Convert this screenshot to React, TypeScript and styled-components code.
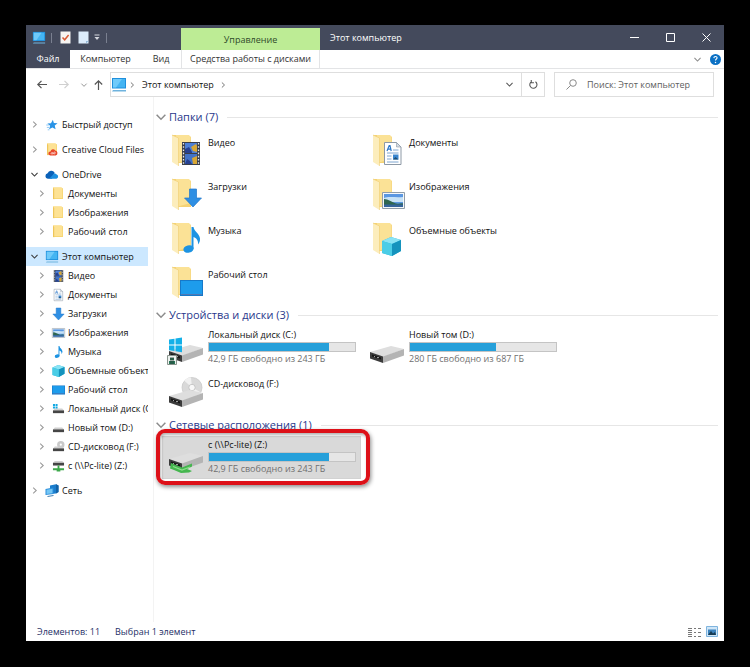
import React from "react";
import styled, { createGlobalStyle, css } from "styled-components";

const GlobalStyle = createGlobalStyle`
  * { box-sizing: border-box; }
  body {
    margin: 0;
    background: #000;
    font-family: "Open Sans", "Noto Sans", sans-serif;
    font-size: 9px;
    line-height: 14px;
    color: #111;
  }
  button, input {
    font: inherit;
    color: inherit;
    border: 0;
    padding: 0;
    margin: 0;
    background: none;
  }
  h2 { margin: 0; font-weight: 400; }
  ul { margin: 0; padding: 0; list-style: none; }
  svg { display: block; flex: none; overflow: visible; }
`;

const Window = styled.div`
  display: flex;
  flex-direction: column;
  min-height: calc(100vh - 51px);
  margin: 25px 26px 26px;
  background: #fff;
`;

/* ---------- title bar ---------- */

const TitleBar = styled.header`
  display: flex;
  height: 25px;
  background: #444a5c;
  color: #fff;
`;

const QuickAccess = styled.div`
  display: flex;
  align-items: center;
  width: 155px;
  padding-left: 6px;
`;

const QuickButton = styled.button<{ $w?: number }>`
  display: flex;
  justify-content: center;
  width: ${(p) => p.$w ?? 18}px;
`;

const Tick = styled.span`
  width: 1px;
  height: 10px;
  margin: 0 4px 0 5px;
  background: #7a8090;
`;

const ContextTab = styled.div`
  align-self: flex-end;
  width: 139px;
  height: 22px;
  line-height: 24px;
  text-align: center;
  color: #2f4a2a;
  background: #bdec95;
`;

const Caption = styled.h1`
  flex: 1;
  margin: 0;
  padding-left: 10px;
  font-size: 9px;
  font-weight: 400;
  line-height: 25px;
`;

const WindowButton = styled.button`
  display: flex;
  align-items: center;
  justify-content: center;
  width: 36px;
`;

/* ---------- ribbon ---------- */

const Ribbon = styled.nav`
  display: flex;
  align-items: center;
  height: 19px;
  border-bottom: 1px solid #e3e4e6;
`;

const RibbonTab = styled.button<{ $w: number; $file?: boolean; $context?: boolean }>`
  width: ${(p) => p.$w}px;
  height: 18px;
  line-height: 18px;
  text-align: center;
  white-space: nowrap;
  color: #333;
  ${(p) =>
    p.$file &&
    css`
      color: #fff;
      background: #444a5c;
    `}
  ${(p) =>
    p.$context &&
    css`
      border: solid #e3e4e6;
      border-width: 0 1px;
    `}
`;

const RibbonTools = styled.div`
  display: flex;
  align-items: center;
  gap: 9px;
  margin-left: auto;
  padding-right: 3px;
`;

const PlainButton = styled.button`
  display: flex;
  align-items: center;
  justify-content: center;
`;

/* ---------- address row ---------- */

const AddressRow = styled.div`
  display: flex;
  align-items: center;
  padding: 3px 10px 0 9px;
`;

const NavButton = styled.button<{ $w: number }>`
  display: flex;
  justify-content: center;
  width: ${(p) => p.$w}px;
`;

const AddressBox = styled.div`
  display: flex;
  flex: 1;
  align-items: center;
  height: 25px;
  margin-left: 1px;
  border: 1px solid #dedede;
`;

const Crumb = styled.button`
  margin: 0 6px;
`;

const AddressEnd = styled.div`
  display: flex;
  align-self: stretch;
  margin-left: auto;
`;

const AddressButton = styled.button<{ $divided?: boolean }>`
  display: flex;
  align-items: center;
  justify-content: center;
  width: 23px;
  border-left: ${(p) => (p.$divided ? "1px solid #dedede" : "0")};
`;

const SearchBox = styled.label`
  display: flex;
  align-items: center;
  gap: 10px;
  width: 160px;
  height: 25px;
  margin-left: 9px;
  padding-left: 11px;
  border: 1px solid #dedede;
`;

const SearchInput = styled.input`
  flex: 1;
  min-width: 0;
  outline: 0;
  &::placeholder {
    color: #606060;
    opacity: 1;
  }
`;

/* ---------- body ---------- */

const Body = styled.div`
  display: flex;
  flex: 1;
`;

const Sidebar = styled.nav`
  width: 128px;
  padding: 18px 5px 0 0;
  border-right: 1px solid #f3f3f3;
`;

const TreeGroup = styled.ul`
  margin-bottom: 6px;
`;

const TreeRow = styled.button<{ $child: boolean; $active: boolean }>`
  display: flex;
  align-items: center;
  width: 100%;
  height: 19px;
  padding-left: ${(p) => (p.$child ? 11 : 4)}px;
  overflow: hidden;
  text-align: left;
  white-space: nowrap;
  background: ${(p) => (p.$active ? "#cce8ff" : "transparent")};
`;

const TreeChevron = styled.span`
  display: flex;
  flex: none;
  justify-content: center;
  width: 9px;
`;

const TreeIcon = styled.span<{ $child: boolean }>`
  display: flex;
  flex: none;
  justify-content: center;
  width: 14px;
  margin: 0 3px 0 ${(p) => (p.$child ? 5 : 6)}px;
`;

const Main = styled.main`
  flex: 1;
  min-width: 0;
  padding: 12px 6px 0 2px;
`;

const GroupHead = styled.button`
  display: flex;
  align-items: center;
  gap: 3px;
  width: 100%;
  height: 16px;
`;

const GroupTitle = styled.h2`
  font-size: 11px;
  line-height: 16px;
  color: #28388c;
  white-space: nowrap;
`;

const GroupLine = styled.span`
  flex: 1;
  height: 1px;
  margin-left: 6px;
  background: #e6e6e6;
`;

const Tiles = styled.div<{ $drives?: boolean }>`
  display: grid;
  grid-template-columns: repeat(auto-fill, 197px);
  column-gap: 4px;
  row-gap: ${(p) => (p.$drives ? 8 : 0)}px;
  padding: ${(p) => (p.$drives ? 4 : 6)}px 0 0 7px;
`;

const Tile = styled.button<{ $drive?: boolean; $selected?: boolean }>`
  position: relative;
  display: flex;
  gap: 4px;
  height: ${(p) => (p.$drive ? 41 : 44)}px;
  padding: ${(p) => (p.$drive ? 1 : 3)}px 4px 0 0;
  text-align: left;
  ${(p) =>
    p.$selected &&
    css`
      background: #d9d9d9;
      box-shadow: 0 0 0 1px #d2d2d2;
      &::after {
        content: "";
        position: absolute;
        inset: -8px -10px -7px -7px;
        border: 4px solid #dd1018;
        border-radius: 9px;
        box-shadow: 1px 2px 4px rgba(0, 0, 0, 0.45), inset 1px 2px 3px rgba(0, 0, 0, 0.3);
      }
    `}
`;

const TileIcon = styled.span<{ $top?: number }>`
  display: flex;
  flex: none;
  justify-content: flex-end;
  width: 41px;
  padding-top: ${(p) => p.$top ?? 0}px;
`;

const TileText = styled.span<{ $top?: number }>`
  display: flex;
  flex: 1;
  flex-direction: column;
  min-width: 0;
  padding-top: ${(p) => p.$top ?? 0}px;
  white-space: nowrap;
`;

const Meter = styled.span`
  height: 10px;
  border: 1px solid #c4c4c4;
  background: #e6e6e6;
`;

const MeterFill = styled.span`
  display: block;
  height: 100%;
  background: #26a0da;
`;

const Free = styled.span`
  color: #707070;
`;

const StatusBar = styled.footer`
  display: flex;
  align-items: center;
  gap: 15px;
  height: 19px;
  padding: 0 6px 0 11px;
  color: #1e2f66;
`;

const ViewButtons = styled.div`
  display: flex;
  gap: 5px;
  margin-left: auto;
`;

/* ---------- icons ---------- */

type Dir = "right" | "down";

const Chevron = ({ dir, color = "#8c8c8c", size = 7 }: { dir: Dir; color?: string; size?: number }) => (
  <svg width={size} height={size} viewBox="0 0 8 8" fill="none" stroke={color} strokeWidth="1.2">
    <path d={dir === "right" ? "M2.5 .7 6 4 2.5 7.3" : "M.5 2.2 4 5.8 7.5 2.2"} />
  </svg>
);

const ComputerIcon = ({ size = 14 }: { size?: number }) => (
  <svg width={size} height={size} viewBox="0 0 16 16">
    <path d="M1 1h14v10.500H1z" fill="#1f8fdc" />
    <path d="M2 2h12v8.500H2z" fill="#44b4f2" />
    <path d="M2 2h9L5 10.500H2z" fill="#6fcafa" />
    <path d="M2 13h13v1.4H1z" fill="#6fb3de" />
  </svg>
);

const StarIcon = () => (
  <svg width="12" height="12" viewBox="0 0 14 14">
    <path d="M8 .8 9.2 4.8l4.3.2-3.3 2.7 1 4.4-3.7-2.2L3.6 12l1.2-4.2L1.6 5.3l4.2-.4z" fill="#2b94e6" />
    <path d="M.3 7h3M1 9.8h2.5M2 12.6h2" stroke="#6cb9f3" strokeWidth=".9" />
  </svg>
);

const FolderIcon = ({ cloud = false }: { cloud?: boolean }) => (
  <svg width="12" height="13" viewBox="0 0 12 13">
    <path d="M1 .5h8.5l1.5 1V12H1z" fill="#f7d673" />
    <path d="M1 .5h8l1.2 1V11H2z" fill="#fde294" />
    <path d="M1 .5 2.2 2v10.5L1 11.8z" fill="#eec65a" />
    {cloud && (
      <g>
        <path d="M4.2 12.4a2 2 0 0 1 .3-4 2.6 2.6 0 0 1 4.7-1 2.6 2.6 0 0 1 .6 5z" fill="#e8472b" />
        <path d="M5 10.4c.8-1.6 1.8-.5 2.3 0s1.7.8 2-.3-1.2-1.5-2 0-1.9 1.1-2.3.3z" fill="none" stroke="#fff" strokeWidth=".7" />
      </g>
    )}
  </svg>
);

const OneDriveIcon = () => (
  <svg width="14" height="10" viewBox="0 0 14 10">
    <path d="M2.8 8.8A2.8 2.8 0 0 1 2.6 3.3 4 4 0 0 1 9.6 2.6L7 8.8z" fill="#0b61b8" />
    <path d="M4.3 8.8 9.3 3.2a3 3 0 0 1 2.4 1.4 2.2 2.2 0 0 1-.3 4.2z" fill="#1c8fe0" />
  </svg>
);

const FilmArt = () => (
  <g>
    <path d="M0 0h18v23H0z" fill="#3a3f4a" />
    <path d="M3 1h12v10H3z" fill="#4d7fd6" />
    <path d="M3 12h12v10H3z" fill="#4273c8" />
    <path d="M9 5l5-3 1 2v6l-4-1zM10 16l5-2v8h-4z" fill="#d8a735" />
    <path d="M3 7 7 5l3 5v1H3zM5 17l3 2 2 3H3z" fill="#27408f" />
    <path d="M1.5 1v21M16.5 1v21" stroke="#e8ebf0" strokeWidth="1.3" strokeDasharray="1.6 1.6" />
  </g>
);

const DocArt = () => (
  <g>
    <path d="M.5.5h12L17 5v17.5H.5z" fill="#fff" stroke="#8d99a6" />
    <path d="M12.500.5 17 5h-4.500z" fill="#d4dce4" stroke="#8d99a6" strokeWidth=".6" />
    <path d="m3 9 2.200-5.500h.8L7.200 9M4 7.200h3" fill="none" stroke="#2d78c8" strokeWidth="1.200" />
    <path d="M9 8h5.500M3 11h11.500M3 14h4.500M3 17h4.500M3 20h11.500" stroke="#7ea6d0" strokeWidth="1" />
    <path d="M9 12.500h5.500v5H9z" fill="#3a86cf" />
    <path d="m9 17.500 2.500-2.500 3 2.500z" fill="#1d4e72" />
  </g>
);

const DownArt = () => <path d="M5.500 0h7v9h5L9 18 .5 9h5z" fill="#2f8fe3" stroke="#1f77cb" strokeWidth=".7" />;

const PhotoArt = () => (
  <g>
    <path d="M.5.5h22v16H.5z" fill="#f4f7f9" stroke="#8f9ca8" />
    <path d="M2 2h19v13H2z" fill="#5a97e2" />
    <path d="M2 6c5-2 12 0 19-1v5H2z" fill="#c7e2f6" />
    <path d="M2 7c4 0 8 3 12 4.500 3 .5 5-.5 7 0V13H2z" fill="#2f6650" />
    <path d="M2 12.500h19V15H2z" fill="#35649b" />
  </g>
);

const NoteArt = () => (
  <g fill="#1c93e2">
    <ellipse cx="5.500" cy="22" rx="5.200" ry="3.700" transform="rotate(-14 5.500 22)" />
    <path d="M8.500 0h2c.5 4.500 6 6.500 6.500 11.500.2 2.500-.7 4.500-2 6 .5-4-1.500-6.500-4.500-7.500v12h-2z" />
  </g>
);

const CubeArt = () => (
  <g>
    <path d="M0 4 9 0l10 3v11l-9 5-10-3z" fill="#2bb7dd" />
    <path d="M0 4 9 0l10 3-9 4z" fill="#8ae3f4" />
    <path d="M10 7 19 3v11l-9 5z" fill="#1593bd" />
    <path d="M0 4 10 7v12L0 16z" fill="#4bcde6" />
  </g>
);

const DesktopArt = () => (
  <g>
    <path d="M0 0h23v16H0z" fill="#1679c9" />
    <path d="M1 1h21v13H1z" fill="#1d9cec" />
    <path d="M1 14h21v1H1z" fill="#4f78b4" />
  </g>
);

const art = {
  video: { node: <FilmArt />, w: 18, h: 23, x: 11, y: 8 },
  docs: { node: <DocArt />, w: 18, h: 23, x: 12, y: 8 },
  downloads: { node: <DownArt />, w: 18, h: 18, x: 13, y: 11 },
  photos: { node: <PhotoArt />, w: 23, h: 17, x: 10, y: 14 },
  music: { node: <NoteArt />, w: 17, h: 26, x: 12, y: 5 },
  objects: { node: <CubeArt />, w: 19, h: 19, x: 10, y: 15 },
  desktop: { node: <DesktopArt />, w: 23, h: 16, x: 9, y: 14 },
};
type ArtName = keyof typeof art;

const SmallArt = ({ name }: { name: ArtName }) => {
  const a = art[name];
  return <svg width="13" height="12" viewBox={`0 0 ${a.w} ${a.h}`}>{a.node}</svg>;
};

const BigFolder = ({ name }: { name: ArtName }) => {
  const a = art[name];
  return (
    <svg width="33" height="36" viewBox="0 0 33 36">
      <path d="M1 1h16l3 2v26H5z" fill="#f5d375" />
      <path d="M5 1h13l1.500 2v22L5 29z" fill="#fbe296" />
      <path d="M1 1 7.500 4v28L1 28z" fill="#fcedbc" />
      <path d="M1 1 7.500 4v28" fill="none" stroke="#f0cc70" strokeWidth=".6" />
      <g transform={`translate(${a.x} ${a.y})`}>{a.node}</g>
    </svg>
  );
};

type DriveKind = "system" | "disk" | "cd" | "network";

const iconTop: Record<DriveKind, number> = { system: 10, disk: 5, cd: 0, network: 8 };

const DriveBody = ({ y }: { y: number }) => (
  <g transform={`translate(0 ${y})`}>
    <path d="M1 6 22 0l13 3-21 8z" fill="#dedede" />
    <path d="M1 6l13 4.500V17L1 12.500z" fill="#3b3b3b" />
    <path d="M14 10.500 35 3v6.500L14 17z" fill="#b4b4b4" />
    <path d="m3 8.500 9 3v2l-9-3z" fill="#161616" />
    <path d="M5 10.600h1M8 11.600h2" stroke="#bdbdbd" strokeWidth=".9" />
  </g>
);

const BigDrive = ({ kind }: { kind: DriveKind }) => (
  <svg width="36" height="34" viewBox="0 0 36 34">
    {kind === "cd" && (
      <g>
        <circle cx="24" cy="10.500" r="10" fill="#d9d9d9" stroke="#c4c4c4" strokeWidth=".7" />
        <path d="M24 10.500 16 3.500a10.500 10.500 0 0 1 7-3zM24 10.500l9 5a10 10 0 0 1-6 5z" fill="#f1f1f1" />
        <circle cx="24" cy="10.500" r="3.200" fill="#f8f8f8" stroke="#bdbdbd" strokeWidth=".8" />
      </g>
    )}
    <DriveBody y={kind === "network" || kind === "system" ? 7 : 13} />
    {kind === "system" && (
      <g>
        <path d="M1 1.500 6.500.7V6.500H1zM7.500.5 14-.5v7H7.500zM1 7.500h5.500v5.600L1 12.300zM7.500 7.500H14v6.800l-6.500-1z" fill="#13b0e8" />
        <path d="M-.5 17.500h9v9h-9z" fill="#edf2ef" stroke="#89948d" />
        <path d="M2 20h4v2H2zM1 23h6v3H1z" fill="#287557" />
        <path d="M3 19v7M5 19v7" stroke="#263b35" strokeWidth=".8" />
      </g>
    )}
    {kind === "network" && (
      <g>
        <path d="m3 17 11 4.500 10-4v3l-5 2.500 5 2-3 1.500-8 .5-7-3-4-1.500z" fill="#45b64f" />
        <path d="m5 20.500 9 3.500 8-3" fill="none" stroke="#8be08b" strokeWidth="1.200" />
      </g>
    )}
  </svg>
);

const SmallDrive = ({ kind }: { kind: DriveKind }) => (
  <svg width="13" height="12" viewBox="0 0 14 13">
    {kind === "cd" && (
      <g>
        <circle cx="9.500" cy="4" r="4" fill="#c9c9c9" />
        <circle cx="9.500" cy="4" r="1.200" fill="#fff" />
      </g>
    )}
    <path d={kind === "network" ? "m1 3 2-2h8l2 2z" : "m1 8 2-2h8l2 2z"} fill="#cfcfcf" />
    <path d={kind === "network" ? "M1 3h12v3H1z" : "M1 8h12v3H1z"} fill="#454545" />
    {kind === "system" && (
      <path d="M1 1h2.200v2.200H1zM3.800 1H6v2.200H3.800zM1 3.800h2.200V6H1zM3.800 3.800H6V6H3.800z" fill="#13a9e2" />
    )}
    {kind === "network" && <path d="M6 6h2v3h5v2H9v1.500H5V11H1V9h5z" fill="#3da84a" />}
  </svg>
);

const NetworkIcon = () => (
  <svg width="14" height="13" viewBox="0 0 14 13">
    <path d="m5 1.500 6-1.300 2.500 1.200V8L11 9.500 5 10z" fill="#1b7dcc" />
    <path d="m11 .2 2.500 1.200V8L11 9.500z" fill="#1362a6" />
    <path d="m.5 5 8-1.500V10L.5 11z" fill="#2a8edb" />
    <path d="m1.500 5.800 6-1.100v4.500l-6 .8z" fill="#74c6f5" />
    <path d="m2.500 12.500 6-1" stroke="#3f7eb2" />
  </svg>
);

const PageIcon = ({ check = false }: { check?: boolean }) => (
  <svg width="11" height="13" viewBox="0 0 11 13">
    <path d="M.5.5h10v12H.5z" fill={check ? "#f7f5f2" : "#dcecfb"} />
    {check ? (
      <path d="m2.500 6.500 2.200 2.300L8.600 4" fill="none" stroke="#d85b36" strokeWidth="1.500" />
    ) : (
      <path d="M8 12.500V10h2.500z" fill="#93b9da" />
    )}
  </svg>
);

/* ---------- data ---------- */

type Node = { label: string; icon: React.ReactNode; open?: boolean; active?: boolean; children?: Node[] };

const tree: Node[] = [
  { label: "Быстрый доступ", icon: <StarIcon /> },
  { label: "Creative Cloud Files", icon: <FolderIcon cloud /> },
  {
    label: "OneDrive",
    icon: <OneDriveIcon />,
    open: true,
    children: [
      { label: "Документы", icon: <FolderIcon /> },
      { label: "Изображения", icon: <FolderIcon /> },
      { label: "Рабочий стол", icon: <FolderIcon /> },
    ],
  },
  {
    label: "Этот компьютер",
    icon: <ComputerIcon />,
    open: true,
    active: true,
    children: [
      { label: "Видео", icon: <SmallArt name="video" /> },
      { label: "Документы", icon: <SmallArt name="docs" /> },
      { label: "Загрузки", icon: <SmallArt name="downloads" /> },
      { label: "Изображения", icon: <SmallArt name="photos" /> },
      { label: "Музыка", icon: <SmallArt name="music" /> },
      { label: "Объемные объекты", icon: <SmallArt name="objects" /> },
      { label: "Рабочий стол", icon: <SmallArt name="desktop" /> },
      { label: "Локальный диск (C:)", icon: <SmallDrive kind="system" /> },
      { label: "Новый том (D:)", icon: <SmallDrive kind="disk" /> },
      { label: "CD-дисковод (F:)", icon: <SmallDrive kind="cd" /> },
      { label: "с (\\\\Pc-lite) (Z:)", icon: <SmallDrive kind="network" /> },
    ],
  },
  { label: "Сеть", icon: <NetworkIcon /> },
];

const folders: { label: string; art: ArtName }[] = [
  { label: "Видео", art: "video" },
  { label: "Документы", art: "docs" },
  { label: "Загрузки", art: "downloads" },
  { label: "Изображения", art: "photos" },
  { label: "Музыка", art: "music" },
  { label: "Объемные объекты", art: "objects" },
  { label: "Рабочий стол", art: "desktop" },
];

type Drive = { label: string; kind: DriveKind; used?: number; free?: string; selected?: boolean };

const drives: Drive[] = [
  { label: "Локальный диск (C:)", kind: "system", used: 82, free: "42,9 ГБ свободно из 243 ГБ" },
  { label: "Новый том (D:)", kind: "disk", used: 59, free: "280 ГБ свободно из 687 ГБ" },
  { label: "CD-дисковод (F:)", kind: "cd" },
];

const network: Drive[] = [
  { label: "с (\\\\Pc-lite) (Z:)", kind: "network", used: 82, free: "42,9 ГБ свободно из 243 ГБ", selected: true },
];

/* ---------- parts ---------- */

const TreeItem = ({ node, child = false }: { node: Node; child?: boolean }) => (
  <li>
    <TreeRow $child={child} $active={!!node.active}>
      <TreeChevron>
        <Chevron dir={node.open ? "down" : "right"} color={node.open ? "#3a3a3a" : "#9a9a9a"} />
      </TreeChevron>
      <TreeIcon $child={child}>{node.icon}</TreeIcon>
      {node.label}
    </TreeRow>
    {node.children && (
      <ul>
        {node.children.map((c) => (
          <TreeItem key={c.label} node={c} child />
        ))}
      </ul>
    )}
  </li>
);

const Group = ({ title, children }: { title: string; children: React.ReactNode }) => (
  <section>
    <GroupHead aria-expanded="true">
      <Chevron dir="down" size={10} />
      <GroupTitle>{title}</GroupTitle>
      <GroupLine />
    </GroupHead>
    {children}
  </section>
);

const DriveTile = ({ drive }: { drive: Drive }) => (
  <Tile $drive $selected={drive.selected}>
    <TileIcon $top={iconTop[drive.kind]}>
      <BigDrive kind={drive.kind} />
    </TileIcon>
    <TileText>
      {drive.label}
      {drive.used !== undefined && (
        <>
          <Meter role="meter" aria-label={drive.label} aria-valuenow={drive.used} aria-valuemin={0} aria-valuemax={100}>
            <MeterFill style={{ width: `${drive.used}%` }} />
          </Meter>
          <Free>{drive.free}</Free>
        </>
      )}
    </TileText>
  </Tile>
);

export default function App() {
  return (
    <>
      <GlobalStyle />
      <Window>
        <TitleBar>
          <QuickAccess>
            <ComputerIcon />
            <Tick />
            <QuickButton aria-label="Свойства">
              <PageIcon check />
            </QuickButton>
            <QuickButton aria-label="Новая папка">
              <PageIcon />
            </QuickButton>
            <QuickButton $w={9} aria-label="Настройка панели">
              <svg width="6" height="7" viewBox="0 0 6 7">
                <path d="M.5 1h5" stroke="#d5d8df" />
                <path d="M.5 3h5L3 6z" fill="#d5d8df" />
              </svg>
            </QuickButton>
            <Tick />
          </QuickAccess>
          <ContextTab>Управление</ContextTab>
          <Caption>Этот компьютер</Caption>
          <WindowButton aria-label="Свернуть">
            <svg width="9" height="9" viewBox="0 0 9 9" stroke="#fff">
              <path d="M0 4.500h9" />
            </svg>
          </WindowButton>
          <WindowButton aria-label="Развернуть">
            <svg width="9" height="9" viewBox="0 0 9 9" stroke="#fff" fill="none">
              <path d="M.5.5h8v8h-8z" />
            </svg>
          </WindowButton>
          <WindowButton aria-label="Закрыть">
            <svg width="9" height="9" viewBox="0 0 9 9" stroke="#fff">
              <path d="m.5.5 8 8m0-8-8 8" />
            </svg>
          </WindowButton>
        </TitleBar>

        <Ribbon>
          <RibbonTab $w={44} $file>Файл</RibbonTab>
          <RibbonTab $w={71}>Компьютер</RibbonTab>
          <RibbonTab $w={40}>Вид</RibbonTab>
          <RibbonTab $w={139} $context>Средства работы с дисками</RibbonTab>
          <RibbonTools>
            <PlainButton aria-label="Развернуть ленту">
              <Chevron dir="down" />
            </PlainButton>
            <PlainButton aria-label="Справка">
              <svg width="11" height="11" viewBox="0 0 12 12">
                <circle cx="6" cy="6" r="6" fill="#0b70c4" />
                <path d="M4.200 4.500C4.300 2 7.900 2.300 7.700 4.300 7.600 5.500 6 5.500 6 7.200" fill="none" stroke="#fff" strokeWidth="1.200" />
                <circle cx="6" cy="9.200" r=".8" fill="#fff" />
              </svg>
            </PlainButton>
          </RibbonTools>
        </Ribbon>

        <AddressRow>
          <NavButton $w={13} aria-label="Назад">
            <svg width="10" height="9" viewBox="0 0 10 9" fill="none" stroke="#555" strokeWidth="1.200">
              <path d="M10 4.500H.8M4.500.8.8 4.500l3.700 3.700" />
            </svg>
          </NavButton>
          <NavButton $w={32} aria-label="Вперед">
            <svg width="10" height="9" viewBox="0 0 10 9" fill="none" stroke="#d0d0d0" strokeWidth="1.200">
              <path d="M0 4.500h9.200M5.500.8l3.700 3.700-3.700 3.700" />
            </svg>
          </NavButton>
          <NavButton $w={7} aria-label="Недавние">
            <Chevron dir="down" size={6} />
          </NavButton>
          <NavButton $w={22} aria-label="Вверх">
            <svg width="9" height="10" viewBox="0 0 9 10" fill="none" stroke="#555" strokeWidth="1.200">
              <path d="M4.500 10V.8M.8 4.500 4.500.8l3.700 3.700" />
            </svg>
          </NavButton>
          <AddressBox>
            <ComputerIcon size={16} />
            <NavButton $w={9} aria-label="Расположения">
              <Chevron dir="right" color="#666" size={6} />
            </NavButton>
            <Crumb>Этот компьютер</Crumb>
            <Chevron dir="right" color="#666" size={6} />
            <AddressEnd>
              <AddressButton aria-label="История">
                <Chevron dir="down" color="#555" />
              </AddressButton>
              <AddressButton $divided aria-label="Обновить">
                <svg width="9" height="9" viewBox="0 0 10 10" fill="none" stroke="#555" strokeWidth="1.200">
                  <path d="M7.200 1.900A4 4 0 1 1 3 1.600M2.500 0v3h3" />
                </svg>
              </AddressButton>
            </AddressEnd>
          </AddressBox>
          <SearchBox>
            <svg width="11" height="11" viewBox="0 0 11 11" fill="none" stroke="#8a8a8a">
              <circle cx="7" cy="4" r="3.300" />
              <path d="M4.600 6.400.5 10.500" />
            </svg>
            <SearchInput type="search" aria-label="Поиск" placeholder="Поиск: Этот компьютер" />
          </SearchBox>
        </AddressRow>

        <Body>
          <Sidebar>
            {tree.map((n) => (
              <TreeGroup key={n.label}>
                <TreeItem node={n} />
              </TreeGroup>
            ))}
          </Sidebar>
          <Main>
            <Group title="Папки (7)">
              <Tiles>
                {folders.map((f) => (
                  <Tile key={f.label}>
                    <TileIcon>
                      <BigFolder name={f.art} />
                    </TileIcon>
                    <TileText $top={2}>{f.label}</TileText>
                  </Tile>
                ))}
              </Tiles>
            </Group>
            <Group title="Устройства и диски (3)">
              <Tiles $drives>
                {drives.map((d) => (
                  <DriveTile key={d.label} drive={d} />
                ))}
              </Tiles>
            </Group>
            <Group title="Сетевые расположения (1)">
              <Tiles $drives>
                {network.map((d) => (
                  <DriveTile key={d.label} drive={d} />
                ))}
              </Tiles>
            </Group>
          </Main>
        </Body>

        <StatusBar>
          <span>Элементов: 11</span>
          <span>Выбран 1 элемент</span>
          <ViewButtons>
            <PlainButton aria-label="Таблица">
              <svg width="13" height="10" viewBox="0 0 13 10" stroke="#777">
                <path d="M0 1.500h4M0 3.500h4M0 5.500h4M0 7.500h4M0 9.500h4M6 1.500h2M6 5.500h2M6 9.500h2M10 1.500h3M10 5.500h3M10 9.500h3" />
              </svg>
            </PlainButton>
            <PlainButton aria-label="Крупные значки">
              <svg width="12" height="11" viewBox="0 0 12 11">
                <path d="M.5.5h11v10H.5z" fill="#cfe6f8" stroke="#7fb4de" />
                <path d="M2 3.500h8V9H2z" fill="#3b82bd" />
                <path d="m2 9 3-4 2 2.500L9 6l1 3z" fill="#173a52" />
              </svg>
            </PlainButton>
          </ViewButtons>
        </StatusBar>
      </Window>
    </>
  );
}
